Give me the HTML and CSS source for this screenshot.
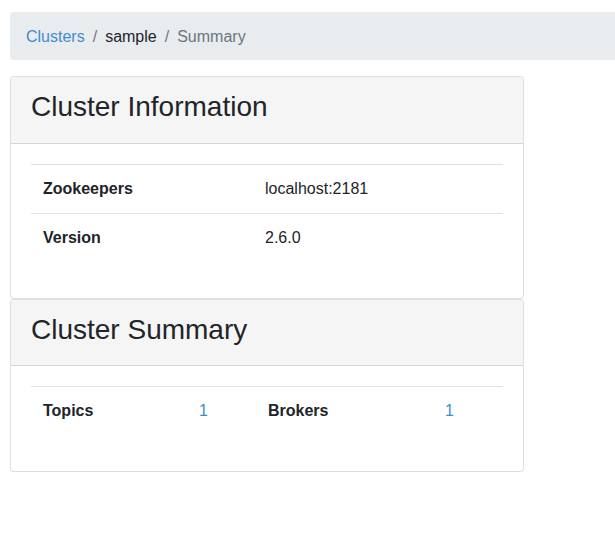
FILE: index.html
```html
<!DOCTYPE html>
<html>
<head>
<meta charset="utf-8">
<link rel="stylesheet" href="styles.css">
</head>
<body>
<div class="page">
  <nav class="breadcrumb">
    <a class="crumb link" href="#">Clusters</a>
    <span class="sep">/</span>
    <span class="crumb">sample</span>
    <span class="sep">/</span>
    <span class="crumb active">Summary</span>
  </nav>
  <div class="cards">
    <div class="card">
      <div class="card-header"><h3>Cluster Information</h3></div>
      <div class="card-body">
        <table class="table info">
          <tr><th>Zookeepers</th><td>localhost:2181</td></tr>
          <tr><th>Version</th><td>2.6.0</td></tr>
        </table>
      </div>
    </div>
    <div class="card">
      <div class="card-header"><h3>Cluster Summary</h3></div>
      <div class="card-body">
        <table class="table summary">
          <tr>
            <th class="c1">Topics</th><td class="c2"><a class="link" href="#">1</a></td>
            <th class="c3">Brokers</th><td class="c4"><a class="link" href="#">1</a></td>
          </tr>
        </table>
      </div>
    </div>
  </div>
</div>
</body>
</html>
```
FILE: styles.css
```css
html, body {
  margin: 0;
  padding: 0;
  background: #fff;
}
body {
  font-family: "Liberation Sans", Arial, sans-serif;
  font-size: 16px;
  line-height: 24px;
  color: #212529;
}
.page {
  padding: 12px 0 0 10px;
  overflow: hidden;
}
.breadcrumb {
  display: flex;
  align-items: center;
  width: 640px;
  height: 48px;
  box-sizing: border-box;
  padding: 13px 16px 11px;
  background: #e9ecef;
  border-radius: 4px;
  margin-bottom: 16px;
}
.sep {
  padding: 0 8px;
  color: #6c757d;
}
.link {
  color: #428bca;
  text-decoration: none;
}
.active {
  color: #6c757d;
}
.cards {
  width: 514px;
  padding-bottom: 2px;
}
.card {
  border: 1px solid rgba(0,0,0,.125);
  border-radius: 4px;
  background: #fff;
}
.card-header {
  background: #f5f5f5;
  padding: 13px 20px 11px;
  border-bottom: 1px solid rgba(0,0,0,.125);
  border-radius: 4px 4px 0 0;
}
.card-header h3 {
  margin: 0 0 8px;
  font-size: 28px;
  font-weight: 400;
  line-height: 33.6px;
}
.card-body {
  padding: 20px;
}
.table {
  width: 100%;
  border-collapse: collapse;
  margin-bottom: 16px;
}
.table th, .table td {
  border-top: 1px solid #dee2e6;
  padding: 12px;
  text-align: left;
  vertical-align: top;
  line-height: 24px;
}
.table th {
  font-weight: 700;
}
.info th { width: 198px; }
.summary .c1 { width: 132px; }
.summary .c2 { width: 45px; }
.summary .c3 { width: 153px; }
```
